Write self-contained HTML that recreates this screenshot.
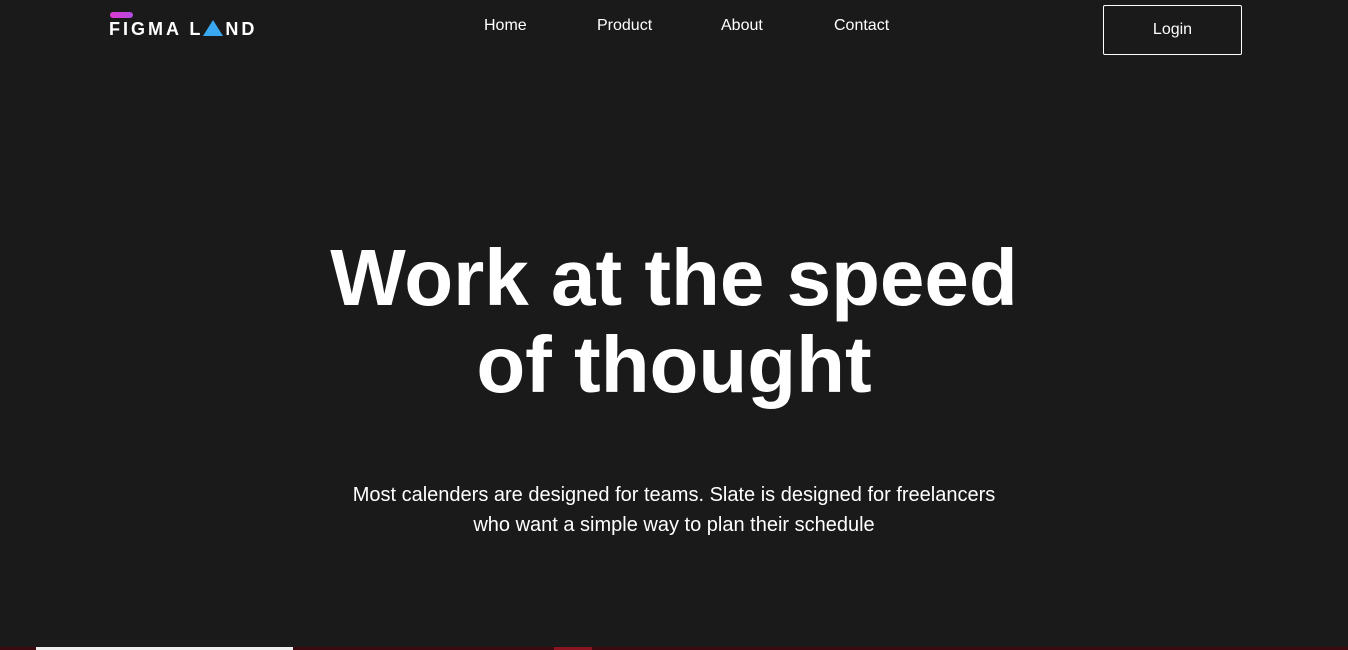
<!DOCTYPE html><html><head><style>
body{margin:0;width:1348px;height:650px;background:#1a1a1a;overflow:hidden;font-family:"Liberation Sans",sans-serif;color:#fff;position:relative}
.logo{position:absolute;left:109px;top:19px;font-weight:bold;font-size:18px;letter-spacing:3px;white-space:nowrap}
.pill{position:absolute;left:110px;top:12px;width:23px;height:6px;border-radius:3px;background:linear-gradient(90deg,#e03ad0,#b04ae0)}
.nav a{position:absolute;top:17px;font-size:16px;color:#fff;text-decoration:none}
.login{position:absolute;left:1103px;top:5px;width:137px;height:48px;border:1px solid #fff;border-radius:2px;font-size:16px;text-align:center;line-height:48px}
h1{position:absolute;left:0;width:1348px;top:234px;margin:0;text-align:center;font-size:80px;line-height:87px;font-weight:bold}
p{position:absolute;left:0;width:1348px;top:480px;margin:0;text-align:center;font-size:20px;line-height:30px}
.strip{position:absolute;top:647px;height:3px}
</style></head><body>
<div class="pill"></div>
<div class="logo">FIGMA L<span style="display:inline-block;width:0;height:0;border-left:10px solid transparent;border-right:10px solid transparent;border-bottom:16px solid #3aa8f0;vertical-align:-1px;margin:0 2px 0 0"></span>ND</div>
<div class="nav"><a style="left:484px">Home</a><a style="left:597px">Product</a><a style="left:721px">About</a><a style="left:834px">Contact</a></div>
<div class="login">Login</div>
<h1>Work at the speed<br>of thought</h1>
<p>Most calenders are designed for teams. Slate is designed for freelancers<br>who want a simple way to plan their schedule</p>
<div class="strip" style="left:0;width:1348px;background:#3a0a10"></div>
<div class="strip" style="left:36px;width:257px;background:#eee"></div>
<div class="strip" style="left:554px;width:38px;background:#8a1420"></div>
</body></html>
